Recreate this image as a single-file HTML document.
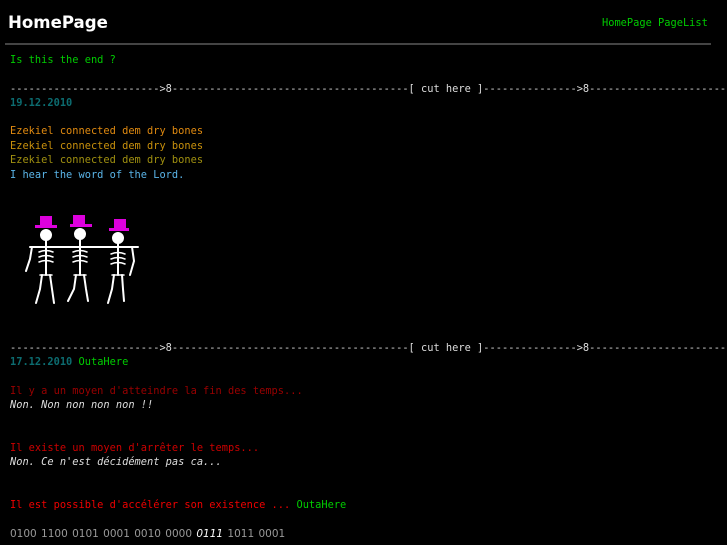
<!DOCTYPE html>
<html><head><meta charset="utf-8"><style>
html,body{margin:0;padding:0;background:#000;width:727px;height:545px;overflow:hidden;position:relative}
.m{position:absolute;left:10px;font-family:"DejaVu Sans Mono","Liberation Mono",monospace;font-size:10.35px;line-height:14px;white-space:nowrap}
.cut{color:#ddd;width:717px;overflow:hidden}
.d{color:#0c6c70;font-weight:bold}
.g{color:#0c0}
</style></head><body>
<div style="position:absolute;left:8px;top:9px;font-family:'DejaVu Sans',sans-serif;font-weight:bold;font-size:16.6px;color:#fff;line-height:28px">HomePage</div>
<div class="m g" style="left:602px;top:16px">HomePage PageList</div>
<div style="position:absolute;left:5px;top:43px;width:706px;height:2px;background:#444"></div>
<div class="m g" style="top:53px">Is this the end ?</div>
<div class="m cut" style="top:82px">------------------------&gt;8--------------------------------------[ cut here ]---------------&gt;8-----------------------</div>
<div class="m d" style="top:96px">19.12.2010</div>
<div class="m" style="top:124px;color:#e08a10">Ezekiel connected dem dry bones</div>
<div class="m" style="top:138.5px;color:#c8900c">Ezekiel connected dem dry bones</div>
<div class="m" style="top:153px;color:#a09010">Ezekiel connected dem dry bones</div>
<div class="m" style="top:167.5px;color:#5ab4e8">I hear the word of the Lord.</div>
<svg style="position:absolute;left:20px;top:205px" width="130" height="110" viewBox="0 0 130 110">
<g fill="#d0d" stroke="none">
<rect x="20" y="11" width="12" height="10"/><rect x="15" y="20" width="22" height="3"/>
<rect x="53" y="10" width="12" height="10"/><rect x="50" y="19" width="22" height="3"/>
<rect x="94" y="14" width="12" height="10"/><rect x="89" y="23" width="20" height="3"/>
</g>
<g stroke="#fff" stroke-width="2" fill="#fff" stroke-linecap="round">
<circle cx="26" cy="30" r="5"/><circle cx="60" cy="29" r="5"/><circle cx="98" cy="33" r="5"/>
<path d="M10 42 L118 42 M26 36 V70 M60 35 V70 M98 38 V70" fill="none"/>
<path d="M19 47 Q26 44 33 47 M19 52 Q26 49 33 52 M19 57 Q26 54 33 57 M53 47 Q60 44 67 47 M53 52 Q60 49 67 52 M53 57 Q60 54 67 57 M91 49 Q98 46 105 49 M91 54 Q98 51 105 54 M91 59 Q98 56 105 59 M20 70 H32 M54 70 H66 M92 70 H104" fill="none" stroke-width="1.5"/>
<path d="M22 70 L20 84 L16 98 M30 70 L32 84 L34 98 M56 70 L54 84 L48 96 M64 70 L66 84 L68 96 M94 70 L92 84 L88 98 M102 70 L103 84 L104 96 M12 42 L10 54 L6 66 M112 42 L114 56 L110 70" fill="none"/>
</g>
</svg>
<div class="m cut" style="top:341px">------------------------&gt;8--------------------------------------[ cut here ]---------------&gt;8-----------------------</div>
<div class="m" style="top:355px"><span class="d">17.12.2010</span> <span class="g">OutaHere</span></div>
<div class="m" style="top:384px;color:#900">Il y a un moyen d'atteindre la fin des temps...</div>
<div class="m" style="top:398px;color:#ddd;font-style:italic">Non. Non non non non !!</div>
<div class="m" style="top:441px;color:#c00">Il existe un moyen d'arrêter le temps...</div>
<div class="m" style="top:455px;color:#ddd;font-style:italic">Non. Ce n'est décidément pas ca...</div>
<div class="m" style="top:498px;color:#e00">Il est possible d'accélérer son existence ... <span class="g">OutaHere</span></div>
<div class="m" style="top:527px;color:#999;font-family:'DejaVu Sans',sans-serif;font-size:10.5px;word-spacing:1px">0100 1100 0101 0001 0010 0000 <i style="color:#fff">0111</i> 1011 0001</div>
</body></html>
